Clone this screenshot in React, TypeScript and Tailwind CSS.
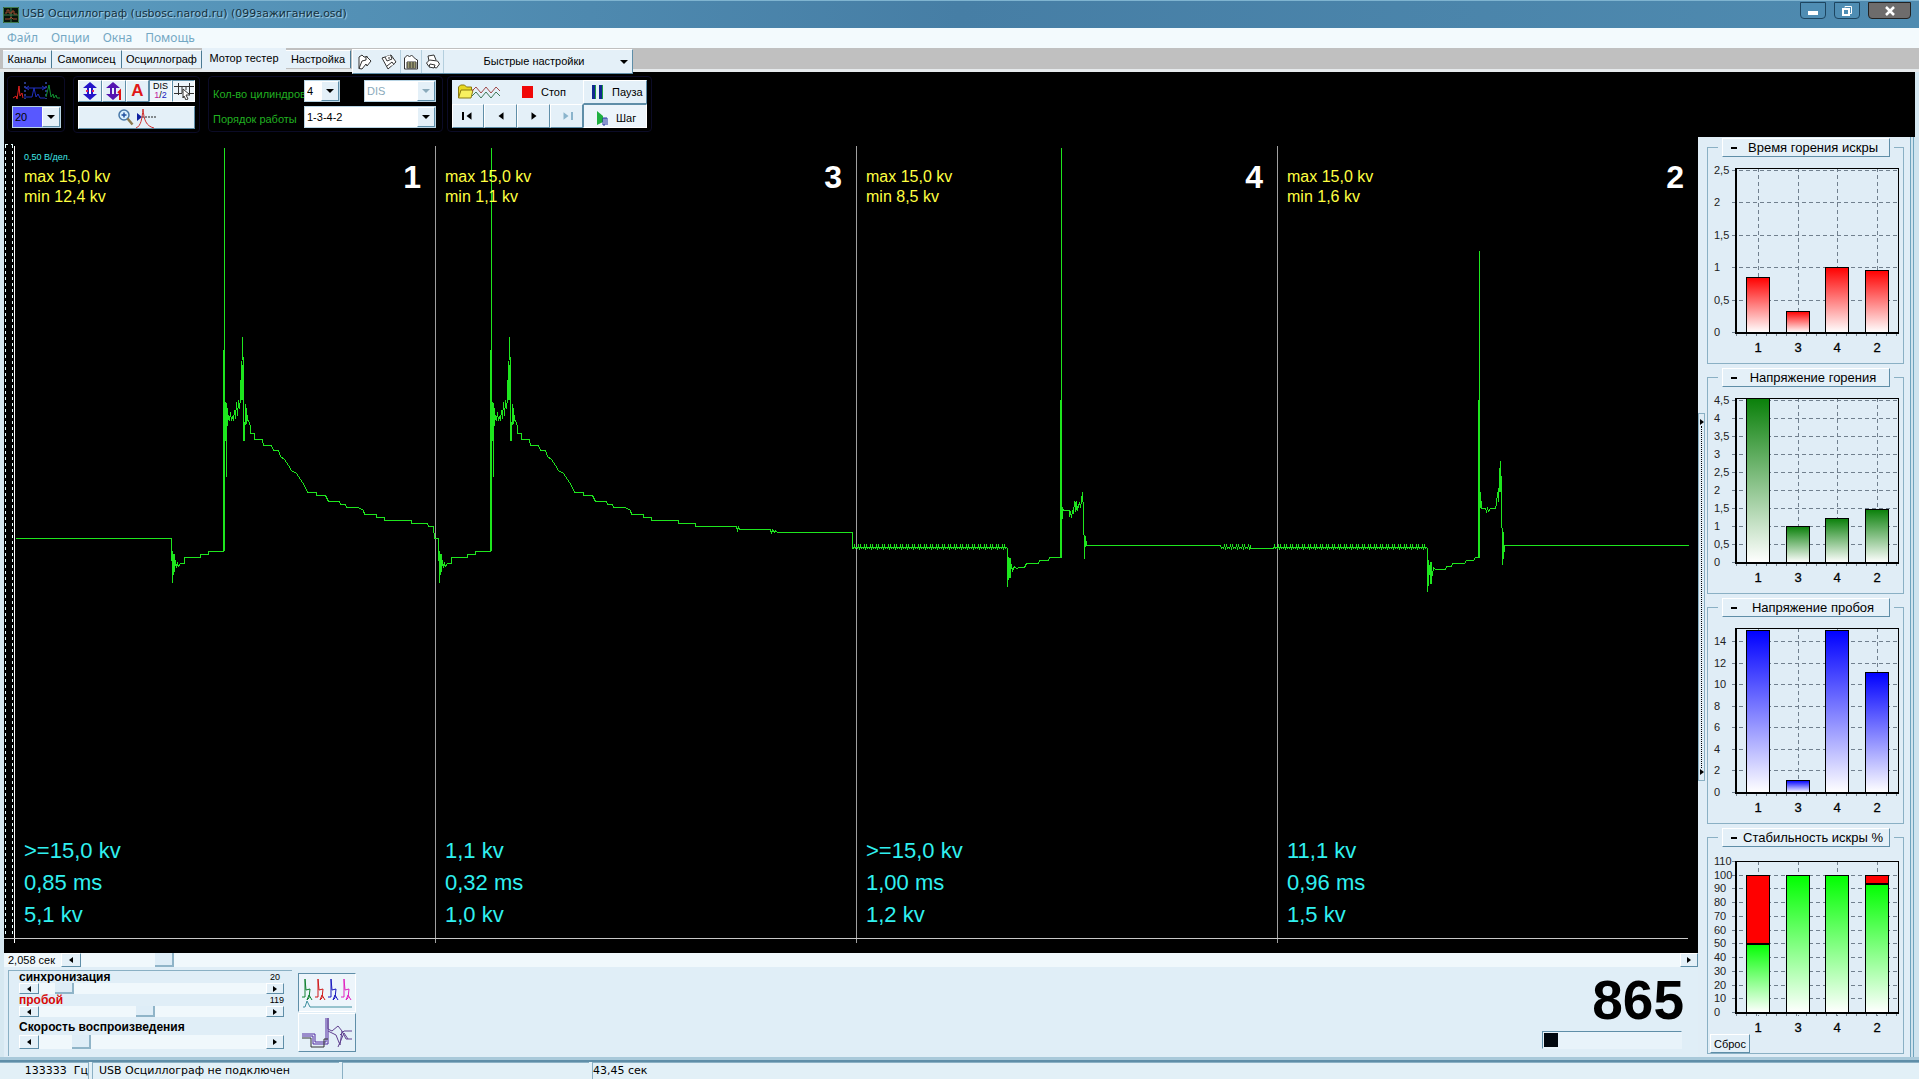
import React, { useState } from 'react';
import clsx from 'clsx';

interface Cylinder {
  id: string;
  max: string;
  min: string;
  breakdown: string;
  duration: string;
  burn: string;
}

interface Bar {
  label: string;
  value: number;
  // upper part of a stacked bar, drawn red above the value
  total?: number;
}

interface ChartProps {
  id: string;
  title: string;
  ticks: number[];
  max: number;
  bars: Bar[];
  from: string;
  top?: number;
  bottom?: number;
  children?: React.ReactNode;
}

const cylinders: Cylinder[] = [
  { id: '1', max: 'max 15,0 kv', min: 'min 12,4 kv', breakdown: '>=15,0 kv', duration: '0,85 ms', burn: '5,1 kv' },
  { id: '3', max: 'max 15,0 kv', min: 'min 1,1 kv', breakdown: '1,1 kv', duration: '0,32 ms', burn: '1,0 kv' },
  { id: '4', max: 'max 15,0 kv', min: 'min 8,5 kv', breakdown: '>=15,0 kv', duration: '1,00 ms', burn: '1,2 kv' },
  { id: '2', max: 'max 15,0 kv', min: 'min 1,6 kv', breakdown: '11,1 kv', duration: '0,96 ms', burn: '1,5 kv' },
];

const raised = 'bg-[#e4f0f8] border border-t-white border-l-white border-b-[#5f8ea8] border-r-[#5f8ea8]';
const sunken = 'bg-[#edf5fb] border border-t-[#5f8ea8] border-l-[#5f8ea8] border-b-white border-r-white';

/* ---------- waveform ---------- */

const firing = (dx: number) =>
  [
    [171, 538], [172, 582], [172, 551], [173, 574], [174, 556], [174, 571], [175, 560], [176, 567], [177, 563], [178, 566],
    [180, 563], [184, 563], [184, 557], [200, 557], [200, 554], [208, 554], [208, 551], [223, 551], [224, 350], [224, 147],
    [224, 402], [225, 402], [226, 476], [226, 405], [227, 425], [228, 415], [229, 420], [230, 412], [231, 420], [232, 416],
    [233, 420], [234, 410], [235, 418], [236, 402], [237, 415], [238, 400], [239, 408], [240, 398], [241, 362], [241, 385],
    [242, 337], [243, 375], [243, 440], [244, 440], [245, 404], [245, 424], [246, 408], [247, 420], [248, 420], [250, 426],
    [250, 433], [254, 433], [254, 439], [262, 439], [263, 445], [271, 445], [273, 450], [278, 450], [280, 456], [284, 459],
    [288, 465], [291, 470], [296, 473], [300, 479], [304, 485], [307, 492], [316, 492], [316, 495], [325, 495], [328, 501],
    [339, 501], [340, 504], [345, 504], [346, 507], [358, 507], [363, 510], [364, 514], [376, 514], [376, 517], [384, 517],
    [384, 520], [411, 520], [411, 523],
  ].map(([x, y]) => `${x + dx},${y}`);

const ripple = (from: number, to: number) => {
  const points: string[] = [];
  for (let x = from; x < to; x += 2) {
    points.push(`${x},548`, `${x + 1},${x % 3 === 0 ? 547 : 545}`);
  }
  return points;
};

const trace = [
  '15,538', ...firing(0), '427,523', '428,526', '433,526', '434,538', '438,538',
  ...firing(267), '695,523', '695,526', '736,526', '737,530', '738,527', '739,529', '770,529', '771,533', '772,529', '774,532', '775,530', '777,532', '852,532', '852,548',
  ...ripple(853, 1007),
  '1007,548', '1007,586', '1008,557', '1008,579', '1009,562', '1010,574', '1011,564', '1012,570', '1014,566', '1016,568', '1019,567', '1024,567', '1026,563', '1038,563', '1039,560', '1048,560', '1049,557', '1061,557',
  '1061,147', '1061,532', '1062,507', '1063,510', '1069,510', '1069,516', '1070,511', '1071,517', '1072,510', '1073,513', '1074,501', '1075,511', '1076,501', '1077,510', '1079,502', '1080,507', '1082,492', '1083,510', '1084,558', '1085,536', '1086,545',
  '1220,545', ...ripple(1221, 1250), '1250,548', '1273,548', ...ripple(1273, 1427),
  '1427,548', '1427,591', '1428,560', '1428,585', '1429,565', '1430,580', '1431,566', '1432,575', '1433,567', '1435,569', '1445,569', '1446,566', '1451,566', '1452,563', '1464,563', '1466,560', '1473,560', '1475,557', '1479,557',
  '1479,250', '1479,524', '1480,492', '1481,508', '1485,508', '1486,511', '1487,508', '1488,511', '1490,508', '1495,508', '1496,503', '1497,492', '1498,501', '1499,475', '1500,461', '1501,490', '1502,564', '1503,532', '1503,558', '1504,545', '1688,545',
].join(' ');

const Scope: React.FC = () => (
  <div className="relative flex min-h-[480px] flex-1 bg-black pt-2.5">
    <svg
      className="absolute inset-0 h-full w-full"
      viewBox="4 137 1694 816"
      preserveAspectRatio="none"
      fill="none"
      shapeRendering="crispEdges"
    >
      <path d="M5.500 144.500V937M12.500 144.500V937" stroke="#e8ffff" strokeDasharray="3 3" />
      <path d="M5 144.500H13" stroke="#e8ffff" strokeDasharray="3 3" />
      <path d="M14.500 146V943" stroke="#fff" />
      <path d="M435.500 146V943M856.500 146V943M1277.500 146V943" stroke="#a0a0a0" />
      <path d="M4 938.500H1688" stroke="#c8c8c8" />
      <polyline points={trace} stroke="#1ee61e" strokeWidth="1" transform="translate(.5 .5)" />
      <path d="M853 547.500H1007M1273 547.500H1427" stroke="#1ee61e" />
      <path d="M224 350V551M491 350V551M1061 400V557M1479 400V557" stroke="#1ee61e" strokeWidth="2" />
      <path d="M225.500 403V424M226.500 408V422M492.500 403V424M493.500 408V422M173.500 554V572M440.500 554V572M1009.500 558V578M1430.500 562V584" stroke="#1ee61e" strokeWidth="2" />
      <path d="M241.500 365V400M508.500 365V400M245.500 410V424M512.500 410V424M1075.500 502V510M1500 475V492M1503 534V558" stroke="#1ee61e" strokeWidth="2" />
    </svg>
    <div className="relative ml-2.5 grid flex-1 grid-cols-4">
      {cylinders.map((cyl, index) => (
        <div key={cyl.id} className="flex flex-col justify-between pr-1 pb-[22px] pl-2.5">
          <div className="flex items-start justify-between">
            <div className="text-base leading-5 text-[#ffff40]">
              <p className="h-5 pt-1 text-[9px] leading-3 text-[#40e8e8]">{index === 0 ? '0,50 В/дел.' : ''}</p>
              <p>{cyl.max}</p>
              <p>{cyl.min}</p>
            </div>
            <p className="pt-3 pr-2.5 text-[32px] leading-9 font-bold text-white">{cyl.id}</p>
          </div>
          <div className="text-[22px] leading-8 text-[#30f0f0]">
            <p>{cyl.breakdown}</p>
            <p>{cyl.duration}</p>
            <p>{cyl.burn}</p>
          </div>
        </div>
      ))}
    </div>
  </div>
);

/* ---------- bar charts ---------- */

const centers = [50, 90, 129, 169];

const BarChart: React.FC<ChartProps> = ({ id, title, ticks, max, bars, from, top = 11, bottom = 175, children }) => {
  const [open, setOpen] = useState(true);
  const y = (value: number) => Math.round(bottom - (Math.min(value, max) * (bottom - top)) / max);

  return (
    <fieldset className="mb-1 w-[197px] border border-[#8ab0c4] last:mb-0">
      <legend className="ml-2.5 px-1">
        <button
          onClick={() => setOpen(!open)}
          className={clsx('flex h-[19px] w-[168px] items-center text-[13px] leading-4 text-black', raised)}
        >
          <span className="ml-2 h-0.5 w-1.5 bg-black" />
          <span className="flex-1 text-center">{title}</span>
        </button>
      </legend>
      {open && (
        <svg className="block h-[206px] w-[194px]" viewBox="0 0 194 206" shapeRendering="crispEdges">
          <defs>
            <linearGradient id={id} x1="0" y1="0" x2="0" y2="1">
              <stop offset="0" stopColor={from} />
              <stop offset="1" stopColor="#fff" />
            </linearGradient>
          </defs>
          <g stroke="#71808e" strokeDasharray="4 3">
            {ticks.map((t) => (
              <line key={t} x1="24" x2="190" y1={y(t) + 0.5} y2={y(t) + 0.5} />
            ))}
            {centers.map((c) => (
              <line key={c} x1={c + 0.5} x2={c + 0.5} y1={top} y2={bottom + 4} />
            ))}
          </g>
          <path d={`M28 ${bottom + 2.5}H190`} stroke="#71808e" strokeDasharray="1 9" strokeWidth="3" />
          {bars.map((bar, i) => (
            <g key={bar.label} stroke="#000">
              {bar.total && (
                <rect x={centers[i] - 11.5} y={y(bar.total) + 0.5} width="23" height={y(bar.value) - y(bar.total)} fill="#f00" />
              )}
              <rect x={centers[i] - 11.5} y={y(bar.value) + 0.5} width="23" height={bottom - y(bar.value)} fill={`url(#${id})`} />
              {bar.total && <path d={`M${centers[i] - 12} ${y(bar.value) + 1}h24`} strokeWidth="2" />}
            </g>
          ))}
          <path d={`M27 ${top + 0.5}H190.500V${bottom}`} fill="none" stroke="#000" />
          <path d={`M28 ${top}V${bottom + 1}H191`} fill="none" stroke="#000" strokeWidth="2" />
          <g fontSize="11" fill="#222">
            {ticks.map((t) => (
              <text key={t} x="6" y={y(t) + 4}>{String(t).replace('.', ',')}</text>
            ))}
          </g>
          <g fontSize="13" fill="#000" stroke="#000" strokeWidth=".3" textAnchor="middle">
            {bars.map((bar, i) => (
              <text key={bar.label} x={centers[i]} y={bottom + 20}>{bar.label}</text>
            ))}
          </g>
          {children}
        </svg>
      )}
    </fieldset>
  );
};

/* ---------- small controls ---------- */

const Triangle: React.FC<{ dir: 'left' | 'right' | 'down'; className?: string }> = ({ dir, className }) => {
  const d = { left: 'M6 1v6L2 4z', right: 'M2 1v6l4-3z', down: 'M0 2h8L4 6z' }[dir];
  return (
    <svg viewBox="0 0 8 8" className={clsx('h-2 w-2', className)}>
      <path d={d} fill="currentColor" />
    </svg>
  );
};

interface DropdownProps {
  id: string;
  label: string;
  options: string[];
  className?: string;
  disabled?: boolean;
  highlight?: boolean;
}

const Dropdown: React.FC<DropdownProps> = ({ id, label, options, className, disabled, highlight }) => (
  <div className={clsx('relative h-[22px] bg-white', className)}>
    <select
      id={id}
      aria-label={label}
      disabled={disabled}
      className={clsx(
        'h-full w-full appearance-none border border-[#b8d4e4] pl-0.5 text-[11px] focus:outline-none',
        disabled ? 'text-[#8aaabb]' : 'text-black',
        highlight && 'bg-[#5858ff] text-[#101060]'
      )}
    >
      {options.map((o) => (
        <option key={o}>{o}</option>
      ))}
    </select>
    <span className={clsx('pointer-events-none absolute inset-y-px right-px flex w-[18px] items-center justify-center', raised, disabled && 'text-[#8aaabb]')}>
      <Triangle dir="down" />
    </span>
  </div>
);

interface ScrollProps {
  label: string;
  value: number;
  size: 'sm' | 'lg';
}

const ScrollBar: React.FC<ScrollProps> = ({ label, value, size }) => {
  const [pos, setPos] = useState(value);
  const h = size === 'lg' ? 'h-3.5' : 'h-[11px]';
  return (
    <div className={clsx('flex min-w-0 flex-1 bg-[#f0f8fc]', h)}>
      <button aria-label={`${label} −`} onClick={() => setPos(pos - 1)} className={clsx('flex w-5 items-center justify-center', raised)}>
        <Triangle dir="left" />
      </button>
      <input
        type="range"
        aria-label={label}
        min={0}
        max={1000}
        value={pos}
        onChange={(e) => setPos(Number(e.target.value))}
        className={clsx(
          'h-full min-w-0 flex-1 appearance-none bg-transparent [&::-webkit-slider-thumb]:w-[19px] [&::-webkit-slider-thumb]:appearance-none [&::-webkit-slider-thumb]:border-r-2 [&::-webkit-slider-thumb]:border-b-2 [&::-webkit-slider-thumb]:border-[#8fb4c8] [&::-webkit-slider-thumb]:bg-[#deedf7]',
          size === 'lg' ? '[&::-webkit-slider-thumb]:h-3.5' : '[&::-webkit-slider-thumb]:h-[11px]'
        )}
      />
      <button aria-label={`${label} +`} onClick={() => setPos(pos + 1)} className={clsx('flex w-[18px] items-center justify-center', raised)}>
        <Triangle dir="right" />
      </button>
    </div>
  );
};

const ToolPanel: React.FC<{ className?: string; children: React.ReactNode }> = ({ className, children }) => (
  <div className={clsx('shrink-0 rounded border border-[#0b0b26] px-1 py-[3px]', className)}>{children}</div>
);

/* ---------- title, menu, tabs ---------- */

const TitleBar: React.FC = () => (
  <header className="flex h-7 items-start justify-between border-t border-[#7fb4d0] bg-linear-to-r from-[#5b9bbf] via-[#467ea5] to-[#4f8bb0] pr-2">
    <div className="flex h-full items-center gap-[3px] pl-[3px]">
      <svg viewBox="0 0 16 16" className="h-4 w-4">
        <rect width="16" height="16" fill="#07160c" />
        <path d="M.5 8h15M8 .5v15M.5.500h15v15H.500z" stroke="#3f7a4c" fill="none" />
        <path d="M2 6h2V3h2v3h3V4h2v3h3M2 12h5l1-2 2 2h4" stroke="#a04a30" fill="none" />
      </svg>
      <h1 className="font-['DejaVu_Sans',sans-serif] text-[11px] text-[#12303f] [text-shadow:1px_1px_1px_#b9dcee]">
        USB Осциллограф (usbosc.narod.ru) (099зажигание.osd)
      </h1>
    </div>
    <div className="flex gap-2 pt-px text-white">
      <button aria-label="Свернуть" className="flex h-[17px] w-[26px] items-center justify-center rounded-b border border-[#1d4560] bg-[#4f8db3]">
        <span className="mt-1 h-1 w-2.5 bg-white" />
      </button>
      <button aria-label="Восстановить" className="flex h-[17px] w-[26px] items-center justify-center rounded-b border border-[#1d4560] bg-[#4f8db3]">
        <svg viewBox="0 0 12 12" className="h-3 w-3" fill="none" stroke="#fff">
          <path d="M4 2.500V1.500h6.500v7H9" />
          <path d="M2 4h6v6H2z" strokeWidth="2" />
        </svg>
      </button>
      <button aria-label="Закрыть" className="flex h-[17px] w-[43px] items-center justify-center rounded-b border border-[#222] bg-[#6e6c6c]">
        <svg viewBox="0 0 10 10" className="h-2.5 w-2.5" stroke="#fff" strokeWidth="2.500">
          <path d="M1 1l8 8M9 1L1 9" />
        </svg>
      </button>
    </div>
  </header>
);

const tabs = [
  { name: 'Каналы', width: 'w-[49px]' },
  { name: 'Самописец', width: 'w-[70px]' },
  { name: 'Осциллограф', width: 'w-[80px]' },
  { name: 'Мотор тестер', width: 'w-[84px]' },
  { name: 'Настройка', width: 'w-[65px]' },
];

const TabRow: React.FC = () => {
  const [active, setActive] = useState('Мотор тестер');
  return (
    <div className="relative z-10 flex h-6 items-start bg-[#c0c0c0] pl-[3px] shadow-[inset_0_-4px_0_-1px_#e6eaec,inset_0_-1px_0_#9aa]">
      {tabs.map((tab) => (
        <button
          key={tab.name}
          onClick={() => setActive(tab.name)}
          className={clsx(
            'shrink-0 text-[11px] whitespace-nowrap text-black',
            tab.width,
            tab.name === active ? 'h-[22px] bg-[#e6f1f9] pb-0.5' : 'mt-0.5 h-[18px] border-t border-r border-t-white border-r-[#4a7a94] bg-[#e6f1f9]'
          )}
        >
          {tab.name}
        </button>
      ))}
      <div className={clsx('mt-px ml-px flex h-[25px] w-[281px]', raised, 'border-l-[#5f8ea8]')}>
        <button aria-label="Открыть" className="flex w-6 items-center justify-center">
          <svg viewBox="0 0 16 16" className="h-4 w-4" fill="#fff" stroke="#333">
            <path d="M2 14.500V3l3-2 2 2h4" />
            <path d="M2 14.500L5 7l4-1V2l5 5-4 5-1-2-4 5z" />
          </svg>
        </button>
        <button aria-label="Сохранить" className="flex w-[23px] items-center justify-center">
          <svg viewBox="0 0 16 16" className="h-4 w-4" fill="#fff" stroke="#333">
            <path d="M1 4l9-3 5 7-8 7z" />
            <path d="M4 3l2 4 5-2-1.500-4M6 12l5-4 2 3M8 3v2" />
          </svg>
        </button>
        <button aria-label="Экспорт" className="flex w-[22px] items-center justify-center border-x border-[#b4cfde]">
          <svg viewBox="0 0 16 16" className="h-4 w-4" fill="#fff" stroke="#333">
            <path d="M1.500 15V4l3-3 2 2 2-2 4 4 2 1v9z" />
            <path d="M4 8h9v6H4z" fill="#ffffb0" />
            <path d="M4 10h9M4 12h9M7 8v6M10 8v6" />
          </svg>
        </button>
        <button aria-label="Печать" className="flex w-[22px] items-center justify-center border-r border-[#b4cfde]">
          <svg viewBox="0 0 16 16" className="h-4 w-4" fill="#fff" stroke="#333">
            <path d="M4 7L3 2l6-1 2 5" />
            <path d="M1.500 9l3-3 8 1 2 3-3 4-8-2z" />
            <path d="M5 10l5 1-1 3-5-1z" />
          </svg>
        </button>
        <button className="flex flex-1 items-center justify-center pl-1 text-[11px] text-black">
          <span className="flex-1">Быстрые настройки</span>
          <Triangle dir="down" className="mr-1" />
        </button>
      </div>
    </div>
  );
};

/* ---------- black toolbar ---------- */

const ToolBar: React.FC = () => (
  <div className="mx-1 flex h-[65px] items-start bg-black pt-1 pl-[3px] text-[11px] text-black">
    <ToolPanel className="w-[58px]">
      <svg viewBox="0 0 50 22" className="mb-1 h-[22px] w-[50px]" fill="none">
        <path d="M1 18l3-2 1 3 2-13 1 10 2-3 1 5" stroke="#e02020" />
        <path d="M13 2v17M34 2v17" stroke="#5070ff" strokeDasharray="2 2" />
        <path d="M13 8h21M17 6l-3 2 3 2M30 6l3 2-3 2M12 17h8l2-9 2 9 2-3 2 4h5" stroke="#2030c0" />
        <path d="M34 17l3-12 2 12 2-3 1 4 2-3 1 3h3" stroke="#109030" />
      </svg>
      <Dropdown id="gain" label="Чувствительность" options={['20', '50', '100']} className="w-[49px]" highlight />
    </ToolPanel>

    <ToolPanel className="ml-2 w-[127px]">
      <div className="mb-1 flex">
        <button aria-label="Масштаб по вертикали" className={clsx('flex h-[22px] w-6 items-center justify-center', raised)}>
          <svg viewBox="0 0 16 18" className="h-[18px] w-4">
            <path d="M8 0l7 6H1zM8 18l7-6H1zM5 6h2v6H5zM9 6h2v6H9z" fill="#2414c8" />
            <path d="M7 6h2v6H7z" fill="#fff" />
            <path d="M4 8h2v2H4zM10 8h2v2h-2z" fill="#e02060" />
          </svg>
        </button>
        <button aria-label="Масштаб первого цилиндра" className={clsx('flex h-[22px] w-6 items-center justify-center', raised)}>
          <svg viewBox="0 0 16 18" className="h-[18px] w-4">
            <path d="M7 0l7 6H0zM7 18l7-6H0zM4 6h2v6H4zM8 6h2v6H8z" fill="#5414b0" />
            <path d="M12 11l2-2v9" fill="none" stroke="#e01010" strokeWidth="2" />
          </svg>
        </button>
        <button aria-label="Авто" className={clsx('h-[22px] w-[23px] text-[17px] leading-5 font-bold text-[#e01818]', raised)}>A</button>
        <button className={clsx('h-[22px] w-[23px] text-[9px] leading-[9px]', sunken)}>
          DIS<br /><span className="text-[#c020a0]">1</span>/<span className="text-[#2020c0]">2</span>
        </button>
        <button aria-label="Курсоры" className={clsx('flex h-[22px] w-[23px] items-center justify-center', sunken)}>
          <svg viewBox="0 0 20 18" className="h-[18px] w-5" fill="none" stroke="#333">
            <path d="M0 4.500h20M0 11.500h8M14 11.500h6M4.500 1v12M15.500 1v10M8 5v6M12 5v3" />
            <path d="M9 7l7 6h-4l2 4-2 1-2-4-1 2z" fill="#fff" />
          </svg>
        </button>
      </div>
      <button aria-label="Увеличить" className={clsx('flex h-[23px] w-[117px] items-center justify-center', raised)}>
        <svg viewBox="0 0 40 22" className="h-[22px] w-10" fill="none">
          <circle cx="7" cy="8" r="5" fill="#d8f0ff" stroke="#4878a8" strokeWidth="1.500" />
          <path d="M4.500 8h5M7 5.500v5" stroke="#2050a0" strokeWidth="1.500" />
          <path d="M10.500 11.500l5 6" stroke="#8a7a50" strokeWidth="2.500" />
          <path d="M20 6l5 4-5 4z" fill="#1020a0" />
          <path d="M25 10h14" stroke="#222" strokeDasharray="2 1" />
          <path d="M19 21c5-2 6-9 7-19 1 11 3 17 11 19" stroke="#d03030" />
        </svg>
      </button>
    </ToolPanel>

    <ToolPanel className="ml-2 w-[235px]">
      <div className="mb-1 flex h-[22px] items-center">
        <label htmlFor="cylinders" className="w-[91px] pt-1.5 whitespace-nowrap text-[#20b020]">Кол-во цилиндров</label>
        <Dropdown id="cylinders" label="Кол-во цилиндров" options={['4', '3', '6', '8']} className="w-9" />
        <Dropdown id="ignition" label="Тип зажигания" options={['DIS']} className="ml-6 w-[72px]" disabled />
      </div>
      <div className="flex h-[22px] items-center">
        <label htmlFor="order" className="w-[91px] pt-1 whitespace-nowrap text-[#20b020]">Порядок работы</label>
        <Dropdown id="order" label="Порядок работы" options={['1-3-4-2', '1-2-4-3']} className="w-[132px]" />
      </div>
    </ToolPanel>

    <ToolPanel className="ml-1 w-[205px]">
      <div className="flex h-6 bg-[#e4f0f8]">
        <button aria-label="Открыть запись" className="flex w-[62px] items-center justify-center pr-2">
          <svg viewBox="0 0 44 18" className="h-[18px] w-11" fill="none">
            <path d="M1.500 15V4l2-2h4l2 2h5v3" fill="#e8d820" stroke="#8a7a10" />
            <path d="M1.500 15L4 7h12l-2 8z" fill="#f8f060" stroke="#8a7a10" />
            <path d="M15 8l4-4 5 6 5-6 5 6 5-6 4 4" stroke="#a04848" />
            <path d="M15 13l4-4 5 6 5-6 5 6 5-6 4 4" stroke="#407858" />
          </svg>
        </button>
        <button className="flex flex-1 items-center gap-2 pl-2">
          <span className="h-3 w-[11px] bg-[#f00808]" />
          Стоп
        </button>
        <button className={clsx('flex w-16 items-center gap-2 pl-2', raised)}>
          <svg viewBox="0 0 12 14" className="h-3.5 w-3">
            <path d="M0 0h4v14H0zM7 0h4v14H7z" fill="#102890" />
            <path d="M3 0h1v14H3zM10 0h1v14h-1z" fill="#20a040" />
          </svg>
          Пауза
        </button>
      </div>
      <div className="flex h-6">
        <button aria-label="В начало" className={clsx('flex w-8 items-center justify-center', raised)}>
          <span className="h-2 w-0.5 bg-black" />
          <Triangle dir="left" className="h-2.5 w-2.5" />
        </button>
        <button aria-label="Назад" className={clsx('flex w-[33px] items-center justify-center', raised)}>
          <Triangle dir="left" className="h-2.5 w-2.5" />
        </button>
        <button aria-label="Вперёд" className={clsx('flex w-[33px] items-center justify-center', raised)}>
          <Triangle dir="right" className="h-2.5 w-2.5" />
        </button>
        <button aria-label="В конец" disabled className={clsx('flex w-[33px] items-center justify-center text-[#8ab4cc]', raised)}>
          <Triangle dir="right" className="h-2.5 w-2.5" />
          <span className="h-2 w-0.5 bg-[#8ab4cc]" />
        </button>
        <button className={clsx('flex w-16 items-center gap-2 pt-1 pl-3', sunken)}>
          <svg viewBox="0 0 12 16" className="h-4 w-3">
            <path d="M1 1l6 5v6l-6 3z" fill="#20b040" />
            <path d="M7 8h2v7H7zM9 8h2v7" fill="none" stroke="#2030a0" />
          </svg>
          Шаг
        </button>
      </div>
    </ToolPanel>
  </div>
);

/* ---------- bottom controls ---------- */

const Controls: React.FC = () => (
  <div className="bg-[#e0eef7] text-black">
    <div className="flex h-3.5 items-center bg-[#f0f8fc]">
      <span className="w-[57px] pl-1 text-[11px] leading-3.5 whitespace-nowrap">2,058 сек</span>
      <ScrollBar label="Позиция" value={47} size="lg" />
    </div>
    <div className="flex h-[90px] items-start justify-between pt-[3px] pr-3.5">
      <div className="flex">
        <div className="ml-1 h-[86px] w-[284px] border-t border-l border-[#8ab0c4] pr-2 pl-2.5 text-xs font-bold">
          <div className="flex h-3 justify-between leading-3">
            <span>синхронизация</span>
            <span className="pr-1 text-[9px] font-normal">20</span>
          </div>
          <div className="flex">
            <ScrollBar label="Синхронизация" value={78} size="sm" />
          </div>
          <div className="flex h-3 justify-between leading-3">
            <span className="text-[#d80808]">пробой</span>
            <span className="text-[9px] font-normal">119</span>
          </div>
          <div className="flex">
            <ScrollBar label="Пробой" value={465} size="sm" />
          </div>
          <p className="pt-1 pb-0.5 leading-3">Скорость воспроизведения</p>
          <div className="flex">
            <ScrollBar label="Скорость воспроизведения" value={158} size="lg" />
          </div>
        </div>
        <div className="ml-1.5 flex flex-col gap-px pt-[3px]">
          <button aria-label="Парад цилиндров" className={clsx('flex h-[39px] w-[58px] items-center justify-center', sunken)}>
            <svg viewBox="0 0 54 36" className="h-9 w-[54px]" fill="none">
              <path d="M2 22h3V4l1 11 4-1-1 9-2 2 2-5 3 5" stroke="#108030" />
              <path d="M15 22h3V4l1 11 4-1-1 9-2 2 2-5 3 5" stroke="#d01818" />
              <path d="M28 22h3V4l1 11 4-1-1 9-2 2 2-5 3 5" stroke="#1818c0" />
              <path d="M41 22h3V4l1 11 4-1-1 9-2 2 2-5 3 5" stroke="#e020c0" />
              <path d="M3 32h2l2-6 3 6h42" stroke="#4090a0" />
            </svg>
          </button>
          <button aria-label="Наложение" className={clsx('flex h-[39px] w-[58px] items-center justify-center', raised)}>
            <svg viewBox="0 0 54 36" className="h-9 w-[54px]" fill="none">
              <path d="M2 19h13v8h11V3M2 21h11v8h15V3" stroke="#5028a0" />
              <path d="M2 23h9v9h13v-8h4" stroke="#333" />
              <path d="M28 3v11l4 2 6-5 4 5-2 14-4-10-8-4M42 16l4 8h6M40 20l4-4h8M38 32l6-14 4 6" stroke="#604090" />
            </svg>
          </button>
        </div>
      </div>
      <div className="flex flex-col items-end">
        <output className="pt-[7px] text-[55px] leading-[46px] font-bold text-black">865</output>
        <div className="mt-2 mr-0.5 h-[18px] w-[140px] border border-[#5f8ea8] border-r-transparent border-b-transparent bg-[#e8f3fa] p-px">
          <div className="h-3.5 w-3.5 bg-[#02080f]" />
        </div>
      </div>
    </div>
  </div>
);

const StatusBar: React.FC = () => (
  <footer className="flex h-[17px] gap-[3px] bg-[#e2f0f7] font-['DejaVu_Sans',sans-serif] text-[11px] leading-4 whitespace-pre text-black">
    <span className="w-[89px] border-t border-r border-[#8ab0c4] text-right">133333  Гц</span>
    <span className="w-[247px] border-t border-l border-[#8ab0c4] pl-1.5">USB Осциллограф не подключен</span>
    <span className="w-[247px] border-t border-l border-[#8ab0c4]" />
    <span className="flex-1 border-t border-l border-[#8ab0c4]">43,45 сек</span>
  </footer>
);

const App: React.FC = () => {
  return (
    <div className="flex min-h-screen flex-col bg-[#d6e8f1] font-['Liberation_Sans',Arial,sans-serif]">
      <TitleBar />
      <nav className="flex h-5 items-center gap-[13px] bg-[#f3fafd] pl-[7px] font-['Noto_Sans',sans-serif] text-xs text-[#74a8c4]">
        <a href="#file">Файл</a>
        <a href="#options">Опции</a>
        <a href="#windows">Окна</a>
        <a href="#help">Помощь</a>
      </nav>
      <TabRow />
      <ToolBar />

      <main className="flex flex-1 pl-1">
        <div className="flex min-w-0 flex-1 flex-col">
          <Scope />
          <Controls />
        </div>
        <aside className="flex w-[221px] bg-[#e0edf6]">
          <div className="flex w-[9px] items-center">
            <div className="flex h-[368px] w-[7px] flex-col items-center justify-between border border-[#8ab0c4] py-1">
              <Triangle dir="right" />
              <div className="flex-1 border-l border-dotted border-black" />
              <Triangle dir="right" />
            </div>
          </div>
          <div className="flex flex-col pt-px">
            <BarChart
              id="burn-time"
              title="Время горения искры"
              ticks={[0, 0.5, 1, 1.5, 2, 2.5]}
              max={2.53}
              from="#ff0000"
              bars={[{ label: '1', value: 0.85 }, { label: '3', value: 0.32 }, { label: '4', value: 1 }, { label: '2', value: 0.96 }]}
            />
            <BarChart
              id="burn-voltage"
              title="Напряжение горения"
              ticks={[0, 0.5, 1, 1.5, 2, 2.5, 3, 3.5, 4, 4.5]}
              max={4.55}
              from="#0a800a"
              bars={[{ label: '1', value: 5.1 }, { label: '3', value: 1 }, { label: '4', value: 1.22 }, { label: '2', value: 1.47 }]}
            />
            <BarChart
              id="breakdown"
              title="Напряжение пробоя"
              ticks={[0, 2, 4, 6, 8, 10, 12, 14]}
              max={15.2}
              from="#0000ff"
              bars={[{ label: '1', value: 15 }, { label: '3', value: 1.1 }, { label: '4', value: 15 }, { label: '2', value: 11.1 }]}
            />
            <BarChart
              id="stability"
              title="Стабильность искры %"
              ticks={[0, 10, 20, 30, 40, 50, 60, 70, 80, 90, 100, 110]}
              max={110}
              top={14}
              bottom={165}
              from="#00ff00"
              bars={[{ label: '1', value: 50, total: 100 }, { label: '3', value: 100 }, { label: '4', value: 100 }, { label: '2', value: 94, total: 100 }]}
            >
              <foreignObject x="2" y="187" width="42" height="19">
                <button className={clsx('block h-[19px] w-10 text-[11px] leading-4 text-black', raised)}>Сброс</button>
              </foreignObject>
            </BarChart>
          </div>
          <div className="ml-1.5 flex-1 border-l-4 border-double border-[#6fa3bd] bg-[#cfe3ee]" />
        </aside>
      </main>

      <div className="h-[5px] border-b-2 border-[#5f8ea8] bg-[#a9c9da]" />
      <StatusBar />
    </div>
  );
};

export default App;
